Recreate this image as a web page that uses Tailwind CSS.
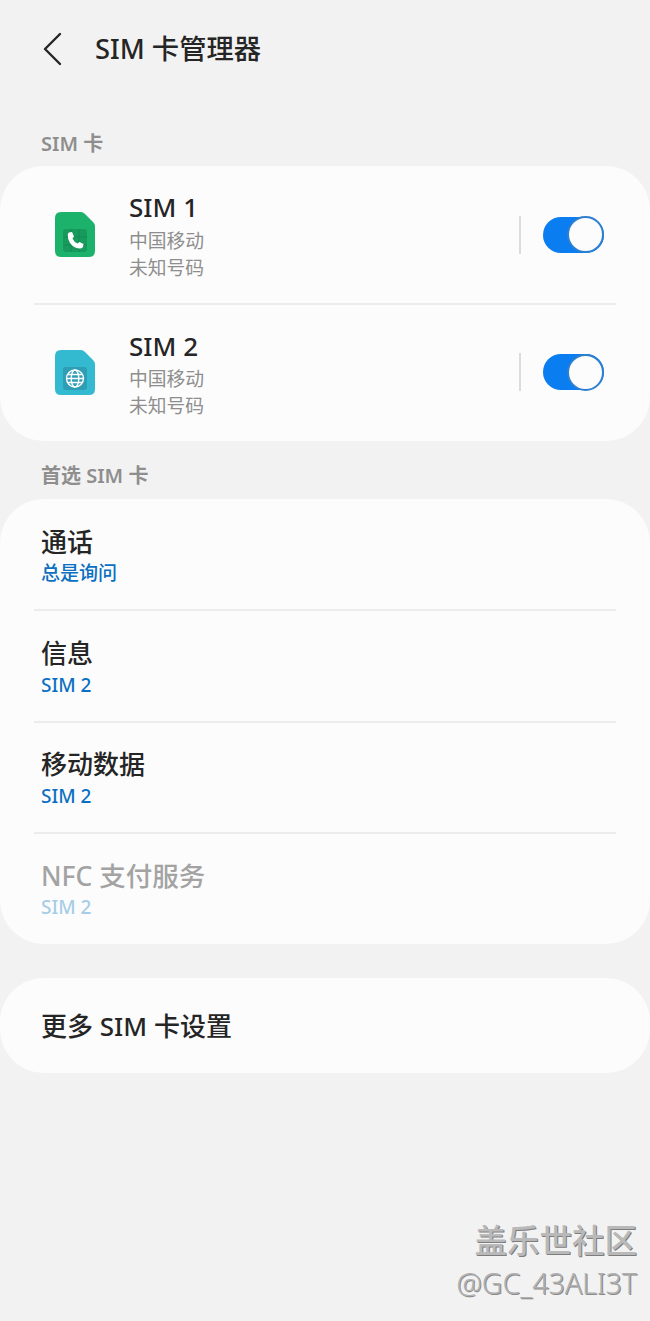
<!DOCTYPE html>
<html lang="zh-CN">
<head>
  <meta charset="UTF-8" />
  <meta name="viewport" content="width=device-width, initial-scale=1" />
  <title>SIM 卡管理器</title>
  <script src="https://cdn.jsdelivr.net/npm/@tailwindcss/browser@4"></script>
</head>
<body class="bg-[#f2f2f2] font-['Noto_Sans','Noto_Sans_CJK_SC',sans-serif]">
  <div class="relative w-[650px] h-[1321px] overflow-hidden">
    <!-- header -->
    <div class="flex items-center h-[97px] pl-[41px]">
      <svg class="w-[24px] h-[34px]" viewBox="0 0 24 34" fill="none" stroke="#252525" stroke-width="2.4" stroke-linecap="round" stroke-linejoin="round">
        <path d="M19 2 L4 17 L19 32" />
      </svg>
      <h1 class="ml-[30px] text-[27.3px] leading-[34px] font-medium text-[#252525]">SIM 卡管理器</h1>
    </div>

    <p class="h-[69px] pt-[34px] pl-[41px] text-[20px] leading-[26px] font-semibold text-[#8e8e8e]">SIM 卡</p>

    <!-- sim cards -->
    <div class="bg-[#fcfcfc] rounded-[44px] h-[275px]">
      <div class="flex items-center h-[139px] mx-[34px] border-b-2 border-[#ececec]">
        <svg class="w-[40px] h-[45px] ml-[21px]" viewBox="0 0 40 45">
          <path d="M6 0 H26 Q28 0 30 2 L38 10 Q40 12 40 14 V39 Q40 45 34 45 H6 Q0 45 0 39 V6 Q0 0 6 0 Z" fill="#1db26b" />
          <rect x="8" y="17" width="24" height="23" rx="3" fill="#179a5c" />
          <path d="M8 25 H32 M8 33 H32 M16 17 V40 M24 17 V40" stroke="#158a52" stroke-width="1" />
          <path d="M14 20.5 L17 20 L19 24.5 L17.5 26.5 Q19 30 22.5 31.5 L24.5 30 L28.5 32 L28 35 Q27 36.5 24.5 36.5 Q18.5 36 15 31 Q12.5 27 12.8 22.5 Q13 21 14 20.5 Z" fill="#ffffff" />
        </svg>
        <div class="ml-[34px] flex-1">
          <p class="text-[26px] leading-[34px] font-medium text-[#252525] mt-[3px]">SIM 1</p>
          <p class="text-[18.8px] leading-[27px] text-[#8e8e8e] mt-[4px]">中国移动</p>
          <p class="text-[18.8px] leading-[27px] text-[#8e8e8e]">未知号码</p>
        </div>
        <div class="w-[2px] h-[38px] bg-[#dcdcdc]"></div>
        <div class="flex items-center w-[61px] h-[36px] ml-[22px] mr-[12px] rounded-full bg-[#0a7df0]">
          <div class="ml-auto w-[37px] h-[37px] rounded-full bg-[#fcfcfc] border-2 border-[#2f7fd0]"></div>
        </div>
      </div>
      <div class="flex items-center h-[134px] mx-[34px]">
        <svg class="w-[40px] h-[45px] ml-[21px]" viewBox="0 0 40 45">
          <path d="M6 0 H26 Q28 0 30 2 L38 10 Q40 12 40 14 V39 Q40 45 34 45 H6 Q0 45 0 39 V6 Q0 0 6 0 Z" fill="#33bad0" />
          <rect x="8" y="17" width="24" height="23" rx="3" fill="#2f9db4" />
          <g fill="none" stroke="#ffffff" stroke-width="1.4">
            <circle cx="20" cy="28.5" r="8.5" />
            <ellipse cx="20" cy="28.5" rx="3.8" ry="8.5" />
            <path d="M11.5 28.5 H28.5 M13 24.5 H27 M13 32.5 H27" />
          </g>
        </svg>
        <div class="ml-[34px] flex-1">
          <p class="text-[26px] leading-[34px] font-medium text-[#252525] mt-[4px]">SIM 2</p>
          <p class="text-[18.8px] leading-[27px] text-[#8e8e8e] mt-[3px]">中国移动</p>
          <p class="text-[18.8px] leading-[27px] text-[#8e8e8e]">未知号码</p>
        </div>
        <div class="w-[2px] h-[38px] bg-[#dcdcdc]"></div>
        <div class="flex items-center w-[61px] h-[36px] ml-[22px] mr-[12px] rounded-full bg-[#0a7df0]">
          <div class="ml-auto w-[37px] h-[37px] rounded-full bg-[#fcfcfc] border-2 border-[#2f7fd0]"></div>
        </div>
      </div>
    </div>

    <p class="h-[58px] pt-[22px] pl-[41px] text-[20px] leading-[26px] font-semibold text-[#8e8e8e]">首选 SIM 卡</p>

    <!-- preferred sim -->
    <div class="bg-[#fcfcfc] rounded-[44px] h-[445px]">
      <div class="flex flex-col justify-center h-[112px] mx-[34px] px-[7px] border-b-2 border-[#ececec]">
        <p class="text-[26px] leading-[36px] font-medium text-[#252525] mt-[2px]">通话</p>
        <p class="text-[19px] leading-[26px] font-medium text-[#0b6fc2]">总是询问</p>
      </div>
      <div class="flex flex-col justify-center h-[112px] mx-[34px] px-[7px] border-b-2 border-[#ececec]">
        <p class="text-[26px] leading-[36px] font-medium text-[#252525]">信息</p>
        <p class="text-[19px] leading-[26px] font-medium text-[#0b6fc2] mt-[1px]">SIM 2</p>
      </div>
      <div class="flex flex-col justify-center h-[111px] mx-[34px] px-[7px] border-b-2 border-[#ececec]">
        <p class="text-[26px] leading-[36px] font-medium text-[#252525]">移动数据</p>
        <p class="text-[19px] leading-[26px] font-medium text-[#0b6fc2] mt-[1px]">SIM 2</p>
      </div>
      <div class="flex flex-col justify-center h-[110px] mx-[34px] px-[7px]">
        <p class="text-[26.5px] leading-[36px] font-medium text-[#a3a3a3]">NFC 支付服务</p>
        <p class="text-[19px] leading-[26px] font-medium text-[#a5cde8]">SIM 2</p>
      </div>
    </div>

    <div class="flex items-center bg-[#fcfcfc] rounded-[44px] h-[95px] mt-[34px] pl-[41px]">
      <p class="text-[26px] leading-[36px] font-medium text-[#252525]">更多 SIM 卡设置</p>
    </div>

    <!-- watermark -->
    <div class="absolute right-[13px] top-[1221px] text-right">
      <p class="text-[32.5px] leading-[40px] font-medium text-[#b9b9b9] [text-shadow:1px_1px_0_#7d7d7d]">盖乐世社区</p>
      <p class="text-[28.5px] leading-[40px] mt-[2px] font-light text-[#b0b0b0] [text-shadow:1px_1px_0_#8a8a8a]">@GC_43ALI3T</p>
    </div>
  </div>
</body>
</html>
